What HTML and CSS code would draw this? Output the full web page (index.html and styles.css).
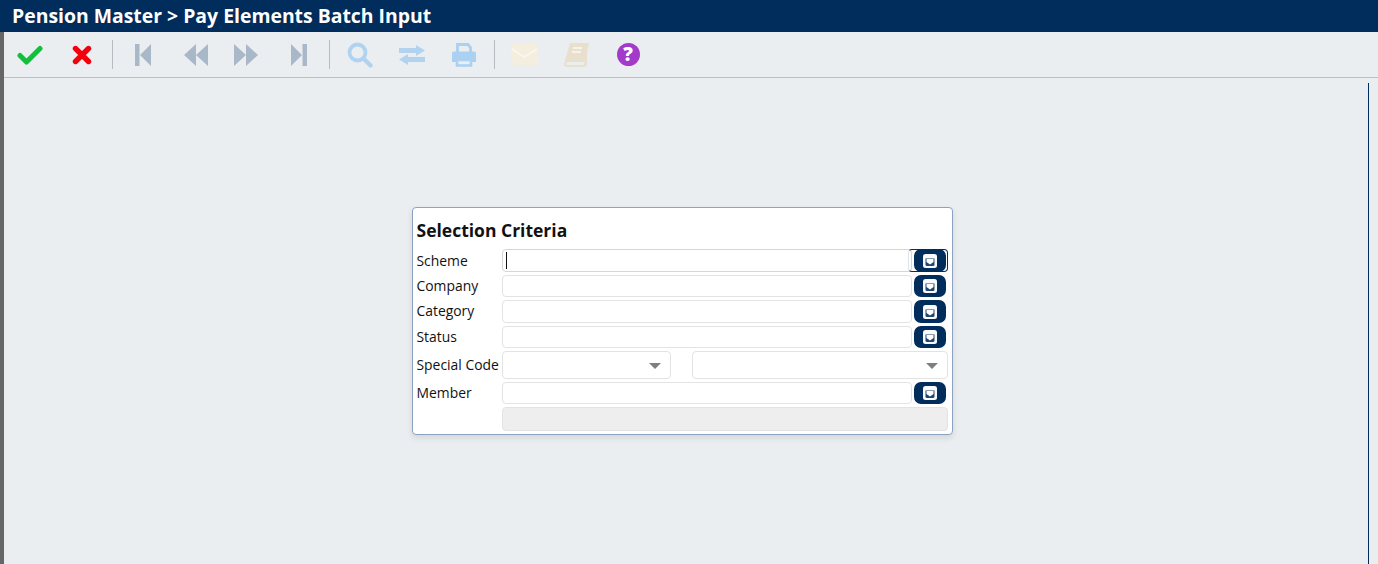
FILE: index.html
```html
<!DOCTYPE html>
<html lang="en">
  <head>
    <meta charset="UTF-8" />
    <title>Pay Elements Batch Input</title>
    <link rel="stylesheet" href="styles.css">
  </head>

  <body>
    <header class="titlebar">Pension Master &gt; Pay Elements Batch Input</header>

    <div class="page">
      <nav class="toolbar">
        <span class="tool">
          <svg width="26" height="20" viewBox="0 0 26 20"><path d="M3 10.5l6.5 6.5L23 3.5" fill="none" stroke="#12bf3c" stroke-width="5" stroke-linejoin="round" stroke-linecap="round"/></svg>
        </span>
        <span class="tool">
          <svg width="20" height="20" viewBox="0 0 20 20"><path d="M3.5 3.5l13 13M16.5 3.5l-13 13" fill="none" stroke="#f4000c" stroke-width="5.4" stroke-linecap="round"/></svg>
        </span>
        <span class="sep"></span>
        <span class="tool">
          <svg width="16" height="22" viewBox="0 0 16 22"><path d="M0 0h4.500v22H0zM16 0v22L5 11z" fill="#a9b8c8"/></svg>
        </span>
        <span class="tool">
          <svg width="26" height="22" viewBox="0 0 26 22"><path d="M14 0v22L2 11zM26 0v22L14 11z" fill="#a9b8c8"/></svg>
        </span>
        <span class="tool">
          <svg width="26" height="22" viewBox="0 0 26 22"><path d="M0 0v22l12-11zM12 0v22l12-11z" fill="#a9b8c8"/></svg>
        </span>
        <span class="tool">
          <svg width="16" height="22" viewBox="0 0 16 22"><path d="M16 0h-4.500v22H16zM0 0v22l11-11z" fill="#a9b8c8"/></svg>
        </span>
        <span class="sep"></span>
        <span class="tool">
          <svg width="26" height="26" viewBox="0 0 26 26"><circle cx="10.500" cy="10.500" r="8" fill="none" stroke="#b2d3f0" stroke-width="3.800"/><path d="M16.500 16.500l7 7" stroke="#b2d3f0" stroke-width="4.400" stroke-linecap="round"/></svg>
        </span>
        <span class="tool">
          <svg width="26" height="20" viewBox="0 0 26 20"><path d="M0 3h17V0l9 5.500-9 5.500V8H0zM26 12H9V9L0 14.500 9 20v-3h17z" fill="#b2d3f0"/></svg>
        </span>
        <span class="tool">
          <svg width="24" height="24" viewBox="0 0 24 24"><path d="M5.500 9V1.500h10.500l2.500 3V9" fill="none" stroke="#aad0f2" stroke-width="2.800"/><path d="M2 8.500h20a2 2 0 0 1 2 2V19h-4v-3H4v3H0v-8.500a2 2 0 0 1 2-2z" fill="#aad0f2"/><path d="M5 17h14v5.500H5z" fill="none" stroke="#aad0f2" stroke-width="2.600"/></svg>
        </span>
        <span class="sep sep-tight"></span>
        <span class="tool">
          <svg width="27" height="21" viewBox="0 0 27 21"><rect width="27" height="21" rx="1.500" fill="#f4eedf"/><path d="M1 5l12.500 8L26 5" fill="none" stroke="#faf7f0" stroke-width="1.500"/></svg>
        </span>
        <span class="tool">
          <svg width="25" height="24" viewBox="0 0 25 24"><path d="M6 0h19l-4 19H3.500l-1.500 2 1 1h17l3-14v14l-2 2H3c-2 0-3-1-3-3z" fill="#e8dfcd"/><path d="M9 5h9M8 9h9" stroke="#f7f3ea" stroke-width="1.800"/></svg>
        </span>
        <span class="tool">
          <span class="help">?</span>
        </span>
      </nav>

      <main class="content">
        <form class="criteria">
          <h3>Selection Criteria</h3>
          <div class="fields">
            <label>Scheme</label>
            <div class="lookup focused">
              <span class="input"><i class="caret"></i></span>
              <button type="button" class="pick"><svg width="14" height="14" viewBox="0 0 14 14"><use href="#pick-icon"/></svg></button>
            </div>

            <label>Company</label>
            <div class="lookup">
              <span class="input"></span>
              <button type="button" class="pick"><svg width="14" height="14" viewBox="0 0 14 14"><use href="#pick-icon"/></svg></button>
            </div>

            <label>Category</label>
            <div class="lookup tall">
              <span class="input"></span>
              <button type="button" class="pick"><svg width="14" height="14" viewBox="0 0 14 14"><use href="#pick-icon"/></svg></button>
            </div>

            <label>Status</label>
            <div class="lookup">
              <span class="input"></span>
              <button type="button" class="pick"><svg width="14" height="14" viewBox="0 0 14 14"><use href="#pick-icon"/></svg></button>
            </div>

            <label>Special Code</label>
            <div class="selects">
              <span class="select"></span>
              <span class="select"></span>
            </div>

            <label>Member</label>
            <div class="lookup">
              <span class="input"></span>
              <button type="button" class="pick"><svg width="14" height="14" viewBox="0 0 14 14"><use href="#pick-icon"/></svg></button>
            </div>

            <span></span>
            <span class="readonly"></span>
          </div>
        </form>
      </main>
    </div>

    <svg class="defs" width="0" height="0">
      <symbol id="pick-icon" viewBox="0 0 14 14">
        <rect width="14" height="14" rx="2.500" fill="#f8fafb"/>
        <path d="M2.500 4.500h9" stroke="#8c9aab" stroke-width="1"/>
        <path d="M2.500 5h9v5.500a1.500 1.500 0 0 1-1.500 1.500H4a1.500 1.500 0 0 1-1.500-1.500z" fill="#23466e"/>
        <path d="M3.500 5h7v3L7 10.500 3.500 8z" fill="#fff"/>
      </symbol>
    </svg>
  </body>
</html>
```

FILE: styles.css
```css
* {
  box-sizing: border-box;
}

html,
body {
  height: 100%;
}

body {
  margin: 0;
  overflow: hidden;
  display: flex;
  flex-direction: column;
  font-family: "Open Sans", "Noto Sans", sans-serif;
  font-size: 13.9px;
  color: #111;
  background-color: #ebeef1;
}

.titlebar {
  height: 32px;
  flex: none;
  padding-left: 12px;
  line-height: 32px;
  font-size: 19.4px;
  font-weight: 700;
  color: #fff;
  background-color: #002d5c;
}

.page {
  flex: 1;
  min-height: 0;
  display: flex;
  flex-direction: column;
  border-left: 4px solid #666;
}

.toolbar {
  height: 46px;
  flex: none;
  display: flex;
  align-items: center;
  border-bottom: 1px solid #bdc1c4;
}

.tool {
  width: 52px;
  flex: none;
  display: flex;
  justify-content: center;
  align-items: center;
}

.sep {
  width: 1px;
  height: 29px;
  margin: 0 4px;
  flex: none;
  background-color: #b5bcc2;
}

.sep-tight {
  margin-right: 3px;
}

.help {
  width: 23px;
  height: 23px;
  border-radius: 50%;
  font-size: 19px;
  font-weight: 800;
  line-height: 23px;
  text-align: center;
  color: #fff;
  background-color: #a23bc9;
}

.content {
  flex: 1;
  min-height: 0;
  margin: 5px 9px 0 0;
  padding: 124px 415px 0 408px;
  border-right: 1px solid #002d5c;
}

.criteria {
  height: 228px;
  padding: 0 4px 0 3.5px;
  border: 1px solid #8ba3c0;
  border-radius: 4px;
  background-color: #fff;
  box-shadow: 0 3px 6px rgba(0, 0, 0, 0.1);
}

.criteria h3 {
  margin: 11px 0 8px;
  font-size: 17.5px;
  line-height: 22px;
  font-weight: 700;
}

.fields {
  display: grid;
  grid-template-columns: 85.5px 1fr;
  row-gap: 3px;
  align-items: center;
}

.fields label {
  padding-bottom: 2px;
}

.fields label:first-child {
  padding-bottom: 0;
}

.lookup {
  height: 22px;
  display: flex;
  gap: 2px;
}

.lookup.tall,
.lookup.focused {
  height: 23px;
}

.input {
  flex: 1;
  display: flex;
  align-items: center;
  padding-left: 3px;
  border: 1px solid #e2e3e5;
  border-radius: 4px;
  background-color: #fff;
}

.caret {
  width: 1px;
  height: 17px;
  background-color: #111;
}

.focused {
  position: relative;
}

.focused .input {
  border-color: #d4d6d8;
}

/* focus ring sits behind the first lookup button */
.focused::after {
  content: "";
  position: absolute;
  top: 0;
  bottom: 0;
  right: 0;
  width: 38px;
  border: 1px solid #002d5c;
  border-left-color: #dfe3e8;
  border-radius: 4px;
  pointer-events: none;
}

.pick {
  position: relative;
  z-index: 1;
  width: 32px;
  margin-right: 2px;
  padding: 0;
  display: flex;
  justify-content: center;
  align-items: center;
  border: 0;
  border-radius: 7px;
  background-color: #002d5c;
}

.selects {
  height: 28px;
  display: flex;
  gap: 21px;
}

.select {
  position: relative;
  width: 169px;
  border: 1px solid #e2e3e5;
  border-radius: 4px;
  background-color: #fff;
}

.select + .select {
  flex: 1;
}

.select::after {
  content: "";
  position: absolute;
  top: 11px;
  right: 9px;
  border-top: 6px solid #7f7f7f;
  border-left: 6px solid transparent;
  border-right: 6px solid transparent;
}

.readonly {
  height: 24px;
  border: 1px solid #e2e3e5;
  border-radius: 4px;
  background-color: #eeeeee;
}

.defs {
  position: absolute;
}
```
